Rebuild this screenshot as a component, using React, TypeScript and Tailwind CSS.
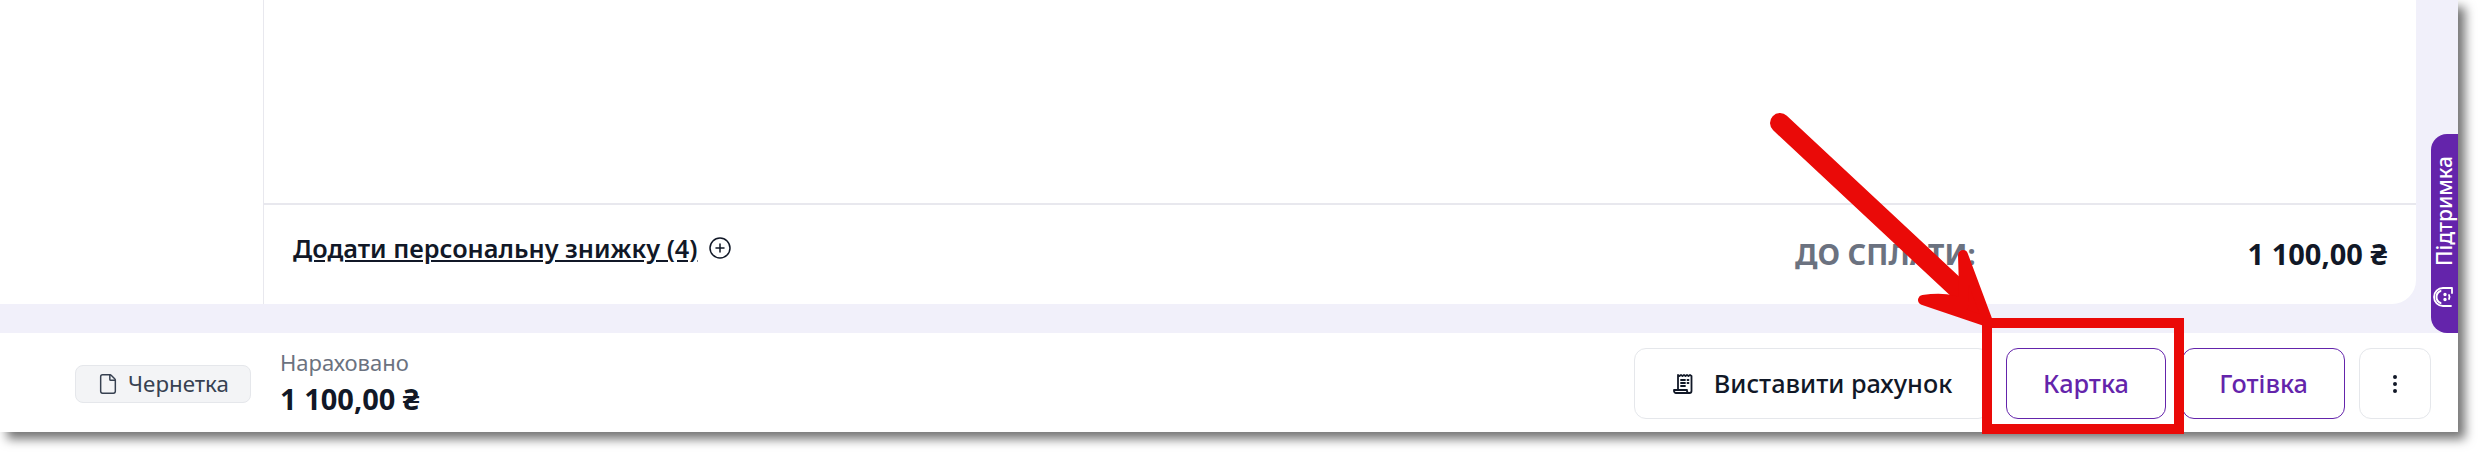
import { CirclePlus, EllipsisVertical, File } from "lucide-react";

const FONT = "font-['Noto_Sans','Open_Sans',sans-serif]";

function ReceiptIcon() {
  return (
    <svg width="24" height="24" viewBox="0 0 24 24" fill="none" stroke="#111827" strokeWidth="1.8" strokeLinecap="round" strokeLinejoin="round">
      <path d="M6 18V3l1.5 1L9 3l1.5 1L12 3l1.5 1L15 3l1.5 1L18 3l1.5 1V19a2 2 0 0 1-2 2H4a2 2 0 0 1-2-2v-1h13v1a2 2 0 0 0 2 2" />
      <path d="M9 8h4M15.5 8h1M9 11h4M15.5 11h1M9 14h4" />
    </svg>
  );
}

// drawn upright, the tab turns it on its side
function SupportIcon() {
  return (
    <svg className="rotate-90" width="24" height="24" viewBox="0 0 24 24" fill="none" stroke="white" strokeWidth="1.8" strokeLinecap="round" strokeLinejoin="round">
      <path d="M3 19V11a9 9 0 0 1 18 0V20h-5" />
      <path d="M6 8.5a6.5 6.5 0 0 1 12 0" strokeWidth="2" />
      <circle cx="9.5" cy="13" r="0.8" fill="white" />
      <circle cx="14.5" cy="13" r="0.8" fill="white" />
      <path d="M10 17c1.3.7 2.7.7 4 0" />
    </svg>
  );
}

export default function App() {
  return (
    <div className={`h-[452px] w-[2478px] overflow-hidden bg-white ${FONT}`}>
      <div className="relative flex h-[432px] w-[2458px] flex-col bg-[#f1f0fa] shadow-[7px_7px_10px_rgba(0,0,0,0.55)]">
        <div className="flex h-[304px] w-[2416px] rounded-br-3xl bg-white">
          <div className="w-[264px] shrink-0 border-r border-[#e8e8ee]" />
          <div className="flex flex-1 flex-col">
            <div className="h-[205px] border-b-2 border-[#e8e8ee]" />
            <div className="flex flex-1 items-start pl-[29px] pr-[29px] pt-[26px]">
              <span className="text-[25.3px] font-semibold leading-[35px] text-[#111827] underline underline-offset-2">
                Додати персональну знижку (4)
              </span>
              <CirclePlus className="ml-[10px] mt-[5px]" size={24} strokeWidth={1.5} color="#111827" />
              <span className="ml-auto mt-[5px] text-[29px] font-bold uppercase leading-[35px] text-[#6b7280]">
                До сплати:
              </span>
              <span className="ml-[272px] mt-[5px] text-[29px] font-bold leading-[35px] text-[#111827]">1 100,00 ₴</span>
            </div>
          </div>
        </div>

        <div className="mt-[29px] flex h-[99px] items-center bg-white pl-[75px] pr-[27px] pt-[2px]">
          <div className="flex h-[38px] w-[176px] items-center justify-center gap-[9px] rounded-lg border border-[#e5e7eb] bg-[#f3f4f6] text-[22.3px] text-[#374151]">
            <File size={22} strokeWidth={1.6} />
            Чернетка
          </div>
          <div className="ml-[29px]">
            <div className="text-[22px] leading-[30px] text-[#6b7280]">Нараховано</div>
            <div className="text-[29px] font-bold leading-[43px] text-[#111827]">1 100,00 ₴</div>
          </div>
          <div className="ml-auto flex items-center">
            <button className="flex h-[71px] w-[356px] items-center justify-center gap-[18px] rounded-xl border border-[#e5e7eb] text-[25.3px] font-medium text-[#111827]">
              <ReceiptIcon />
              Виставити рахунок
            </button>
            <button className="ml-4 h-[71px] w-[160px] rounded-xl border border-[#6424ab] text-[25.3px] font-medium text-[#6424ab]">
              Картка
            </button>
            <button className="ml-4 h-[71px] w-[163px] rounded-xl border border-[#6424ab] text-[25.3px] font-medium text-[#6424ab]">
              Готівка
            </button>
            <button className="ml-[14px] flex h-[71px] w-[72px] items-center justify-center rounded-xl border border-[#e5e7eb]">
              <EllipsisVertical size={24} color="#111827" />
            </button>
          </div>
        </div>

        {/* support tab sits over the page edge */}
        <div className="absolute left-[2431px] top-[134px] flex h-[199px] w-[27px] rotate-180 items-center justify-start gap-[19px] rounded-r-2xl bg-[#6424ab] pt-[24px] text-white [writing-mode:vertical-rl]">
          <SupportIcon />
          <span className="text-[21px] font-medium leading-[27px]">Підтримка</span>
        </div>

        {/* annotation: arrow + frame */}
        <div className="absolute left-[1982px] top-[318px] h-[116px] w-[202px] border-[10px] border-[#ea0a08]" />
        <svg className="absolute left-0 top-0" width="2458" height="452" fill="none" stroke="#ea0a08" strokeLinecap="round">
          <path d="M1780 123L1975 305" strokeWidth="20" />
          <path d="M1988 322L1923 300Q1950 296 1964 305Q1964 285 1963 255Z" fill="#ea0a08" strokeWidth="10" strokeLinejoin="round" />
        </svg>
      </div>
    </div>
  );
}
